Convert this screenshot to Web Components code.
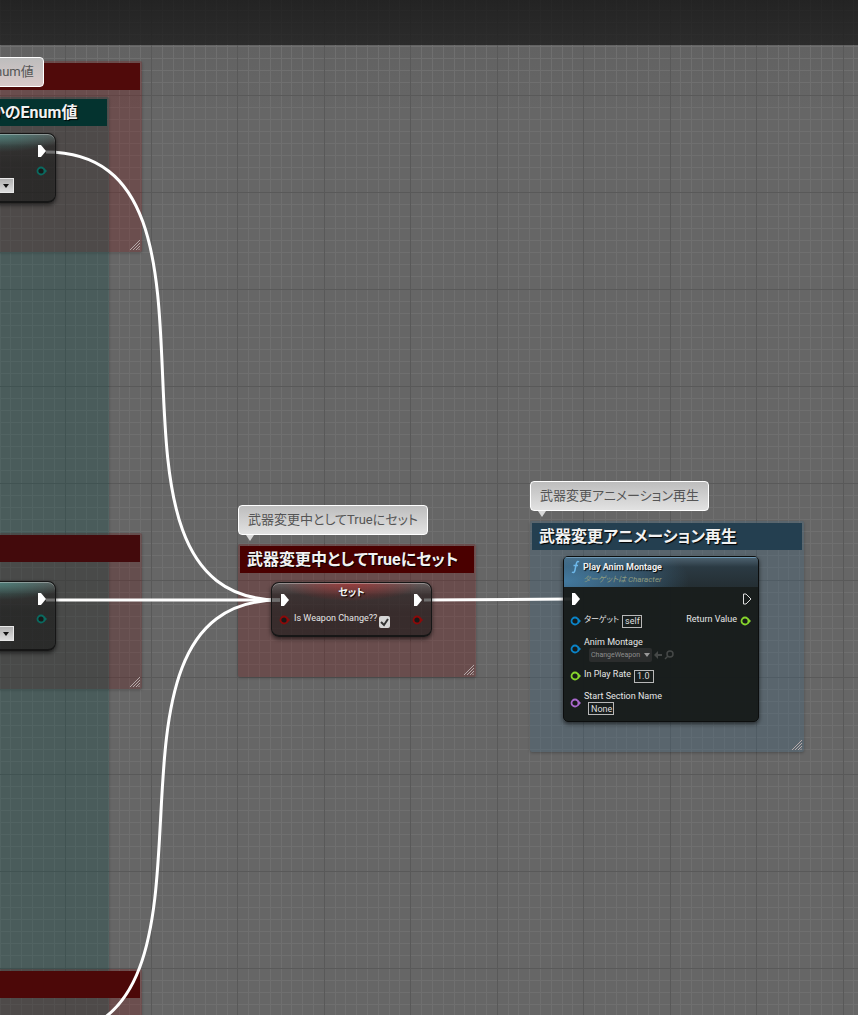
<!DOCTYPE html>
<html lang="ja">
<head>
<meta charset="utf-8">
<meta name="viewport" content="width=device-width, initial-scale=1">
<title>Blueprint Graph</title>
<style>
  body {
    margin: 0;
    background: #666;
    font-family: Roboto, "Noto Sans CJK JP", sans-serif;
    font-feature-settings: "palt";
  }
</style>
</head>
<body>

<blueprint-graph>
  <graph-comment style="left: -20px; top: 61px; width: 162px; height: 191px; --head: #500a0a; --fill: rgba(122, 15, 15, .27)"></graph-comment>
  <graph-comment style="left: -20px; top: 533px; width: 162px; height: 156px; --head: #430a0c; --fill: rgba(100, 15, 15, .27)"></graph-comment>
  <graph-comment style="left: -20px; top: 969px; width: 162px; height: 190px; --head: #4c0808; --fill: rgba(122, 15, 15, .27)"></graph-comment>
  <graph-comment heading="かのEnum値" style="left: -20px; top: 97px; width: 129px; height: 1100px; --head: #04332f; --fill: rgba(0, 68, 64, .27)"></graph-comment>
  <graph-comment heading="武器変更中としてTrueにセット" style="left: 238px; top: 544px; width: 238px; height: 133px; --head: #4a0000; --fill: rgba(115, 10, 10, .27)"></graph-comment>
  <graph-comment heading="武器変更アニメーション再生" style="left: 530px; top: 521px; width: 274px; height: 231px; --head: #243f50; --fill: rgba(60, 100, 125, .3)"></graph-comment>

  <comment-bubble style="left: -34px; top: 57px; --indent: 28px; --tint: #d9c8c8">num値</comment-bubble>
  <comment-bubble style="left: 238px; top: 505px">武器変更中としてTrueにセット</comment-bubble>
  <comment-bubble style="left: 530px; top: 481px">武器変更アニメーション再生</comment-bubble>

  <graph-wires></graph-wires>

  <variable-node style="left: -60px; top: 133px; width: 116px; --glow: rgba(70, 150, 142, .6)">
    <graph-pin slot="exec-out" kind="exec"></graph-pin>
    <graph-pin slot="out" kind="data" style="color: #0a6a60"></graph-pin>
    <pin-select slot="extra" label="Enum" look="light"></pin-select>
  </variable-node>
  <variable-node style="left: -60px; top: 581px; width: 116px; --glow: rgba(70, 150, 142, .6)">
    <graph-pin slot="exec-out" kind="exec"></graph-pin>
    <graph-pin slot="out" kind="data" style="color: #0a6a60"></graph-pin>
    <pin-select slot="extra" label="Enum" look="light"></pin-select>
  </variable-node>
  <variable-node heading="セット" style="left: 271px; top: 582px; width: 161px; --glow: rgba(190, 40, 40, .6)">
    <graph-pin slot="exec-in" kind="exec"></graph-pin>
    <graph-pin slot="exec-out" kind="exec"></graph-pin>
    <graph-pin slot="in" kind="data" style="color: #8c0a0a"></graph-pin>
    <pin-check slot="in" label="Is Weapon Change??"></pin-check>
    <graph-pin slot="out" kind="data" style="color: #8c0a0a"></graph-pin>
  </variable-node>

  <function-node style="left: 563px; top: 556px; width: 196px"></function-node>
</blueprint-graph>

<script>
// canvas with the grid behind and the toolbar shade on top
class BlueprintGraph extends HTMLElement {
  constructor() {
    super();
    this.attachShadow({ mode: 'open' });
    this.shadowRoot.innerHTML = `
      <style>
        :host {
          display: block;
          position: relative;
          min-height: 100vh;
          overflow: hidden;
          background: linear-gradient(#5f5f5f, #666 110px);
        }
        svg {
          position: absolute;
          inset: 0;
          width: 100%;
          height: 100%;
        }
        .minor { stroke: #6f6f6f; }
        .major { stroke: #595959; }
        header {
          position: relative;
          z-index: 9;
          height: 45px;
          background: linear-gradient(rgba(24, 24, 24, .84), rgba(30, 30, 30, .8));
        }
      </style>
      <svg aria-hidden="true" shape-rendering="crispEdges">
        <path class="minor"/>
        <path class="major"/>
      </svg>
      <header></header>
      <slot></slot>
    `;
  }

  connectedCallback() {
    this.drawGrid();
    window.addEventListener('resize', () => this.drawGrid());
  }

  drawGrid() {
    const w = this.clientWidth;
    const h = this.clientHeight;
    const paths = { minor: '', major: '' };
    // 8 small cells to each large one
    for (let i = -8; ; i += 1) {
      const x = Math.floor(65 + i * 778 / 72);
      if (x > w) break;
      paths[i % 8 === 0 ? 'major' : 'minor'] += `M${x + 0.5} 0V${h}`;
    }
    for (let i = -8; ; i += 1) {
      const y = Math.floor(95 + i * 97 / 8);
      if (y > h) break;
      paths[i % 8 === 0 ? 'major' : 'minor'] += `M0 ${y + 0.5}H${w}`;
    }
    this.shadowRoot.querySelector('.minor').setAttribute('d', paths.minor);
    this.shadowRoot.querySelector('.major').setAttribute('d', paths.major);
  }
}

class GraphComment extends HTMLElement {
  constructor() {
    super();
    this.attachShadow({ mode: 'open' });
  }

  connectedCallback() {
    this.shadowRoot.innerHTML = `
      <style>
        :host {
          position: absolute;
          box-sizing: border-box;
          padding: 2px;
          background: var(--fill);
          border-radius: 2px;
          box-shadow: 0 1px 3px rgba(0, 0, 0, .25);
        }
        h2 {
          position: relative;
          z-index: 3;
          box-sizing: border-box;
          height: 27px;
          margin: 0;
          padding-left: 7px;
          background: var(--head);
          color: #f2f2f2;
          font-size: 16px;
          font-weight: 700;
          line-height: 27px;
          white-space: nowrap;
          text-shadow: 1px 1px 1px #000;
        }
        svg {
          position: absolute;
          right: 2px;
          bottom: 2px;
        }
      </style>
      <h2>${this.getAttribute('heading') || ''}</h2>
      <svg width="10" height="10" fill="none" stroke="#b5a9a9" aria-hidden="true">
        <path d="M0 10 10 0M3 10 10 3M6 10 10 6M8.500 10 10 8.500"/>
      </svg>
    `;
  }
}

class CommentBubble extends HTMLElement {
  constructor() {
    super();
    this.attachShadow({ mode: 'open' });
    this.shadowRoot.innerHTML = `
      <style>
        :host {
          position: absolute;
          z-index: 6;
          box-sizing: border-box;
          height: 30px;
          padding: 0 9px 0 var(--indent, 9px);
          border: 1px solid #fff;
          border-radius: 4px;
          background: linear-gradient(#bdbdbd, var(--tint, #e2e2e2));
          color: #555;
          font-size: 13px;
          line-height: 28px;
          white-space: nowrap;
        }
        :host::after {
          content: "";
          position: absolute;
          left: 7px;
          top: 29px;
          border: 4px solid transparent;
          border-top: 6px solid #d8d8d8;
        }
      </style>
      <slot></slot>
    `;
  }
}

class GraphWires extends HTMLElement {
  constructor() {
    super();
    this.attachShadow({ mode: 'open' });
    this.shadowRoot.innerHTML = `
      <style>
        :host {
          position: absolute;
          inset: 0;
          z-index: 4;
        }
        svg {
          display: block;
          overflow: visible;
        }
      </style>
      <svg width="1" height="1" fill="none" stroke="#fff" stroke-width="3" aria-hidden="true">
        <path d="M46 152C261 152 64 600 280 600"/>
        <path d="M46 600H280"/>
        <path d="M42 1036C257 1036 64 600 280 600"/>
        <path d="M424 600 572 599"/>
      </svg>
    `;
  }
}

class GraphPin extends HTMLElement {
  constructor() {
    super();
    this.attachShadow({ mode: 'open' });
  }

  connectedCallback() {
    const kind = this.getAttribute('kind');
    let shape = '<circle cx="5" cy="6" r="3.500" fill="#171a19" stroke="currentColor" stroke-width="1.800"/><path d="M8 3 11 6 8 9z" fill="currentColor"/>';
    if (kind === 'exec') {
      shape = '<path d="M2 0H5L10 6 5 12H2z" fill="#fff"/>';
    } else if (kind === 'exec-open') {
      shape = '<path d="M3.500 1H6L11 6 6 11H3.500z" fill="none" stroke="#ddd"/>';
    }
    this.shadowRoot.innerHTML = `
      <style>
        :host {
          display: block;
          flex: none;
          width: 12px;
          height: 12px;
        }
        svg { display: block; }
      </style>
      <svg width="12" height="12" aria-hidden="true">${shape}</svg>
    `;
  }
}

class PinCheck extends HTMLElement {
  constructor() {
    super();
    this.attachShadow({ mode: 'open' });
  }

  connectedCallback() {
    this.shadowRoot.innerHTML = `
      <style>
        :host { display: block; }
        label {
          display: flex;
          align-items: flex-end;
          gap: 2px;
          color: #e6e6e6;
          font-size: 9px;
          line-height: 12px;
          white-space: nowrap;
        }
        span { padding-bottom: 4px; }
        input {
          appearance: none;
          width: 11px;
          height: 12px;
          margin: 0;
          border-radius: 2px;
          background: #d6d6d6;
        }
        .box { display: grid; padding: 0; }
        .box > * { grid-area: 1 / 1; }
        svg { pointer-events: none; }
        input:not(:checked) + svg { visibility: hidden; }
      </style>
      <label><span>${this.getAttribute('label')}</span>
        <span class="box">
          <input type="checkbox" checked>
          <svg width="11" height="12" fill="none" stroke="#333" stroke-width="2" aria-hidden="true"><path d="M2 6 5 9 9 3"/></svg>
        </span>
      </label>
    `;
  }
}

class PinSelect extends HTMLElement {
  constructor() {
    super();
    this.attachShadow({ mode: 'open' });
  }

  connectedCallback() {
    const light = this.getAttribute('look') === 'light';
    this.shadowRoot.innerHTML = `
      <style>
        :host {
          display: grid;
          width: ${light ? 60 : 63}px;
        }
        select {
          grid-area: 1 / 1;
          appearance: none;
          height: ${light ? 15 : 14}px;
          margin: 0;
          padding: 0 0 0 2px;
          border: ${light ? '1px solid #e8e8e8' : '0'};
          border-radius: ${light ? 0 : 2}px;
          background: ${light ? 'linear-gradient(#b0b0b0, #dcdcdc)' : '#2b2d2d'};
          color: #8d8d8d;
          font: 7px Roboto, sans-serif;
        }
        svg {
          grid-area: 1 / 1;
          place-self: center end;
          margin-right: ${light ? 5 : 2}px;
          pointer-events: none;
        }
      </style>
      <select aria-label="${this.getAttribute('label')}"><option>${this.getAttribute('value') || ''}</option></select>
      <svg width="6" height="4" fill="${light ? '#111' : '#999'}" aria-hidden="true"><path d="M0 0H6L3 4z"/></svg>
    `;
  }
}

// compact node used by the set / enum nodes
class VariableNode extends HTMLElement {
  constructor() {
    super();
    this.attachShadow({ mode: 'open' });
  }

  connectedCallback() {
    this.shadowRoot.innerHTML = `
      <style>
        :host {
          position: absolute;
          z-index: 5;
          box-sizing: border-box;
          border: 1px solid #161616;
          border-bottom-width: 2px;
          border-radius: 8px;
          background:
            radial-gradient(ellipse 70px 18px at 50% 0, var(--glow), transparent),
            linear-gradient(rgba(150, 150, 150, .45), rgba(60, 58, 58, .3) 12px, rgba(20, 18, 18, .1) 30px),
            rgba(22, 22, 22, .54);
          box-shadow: 0 2px 4px rgba(0, 0, 0, .6), inset 0 1px 0 rgba(220, 220, 220, .4);
        }
        .row {
          display: flex;
          align-items: center;
          justify-content: space-between;
          height: 22px;
          padding: 0 7px;
        }
        .head {
          height: 18px;
          padding-top: 8px;
        }
        .side {
          display: flex;
          align-items: center;
          gap: 3px;
        }
        h3 {
          align-self: flex-start;
          margin: -8px 0 0;
          color: #f2f2f2;
          font-size: 10px;
          line-height: 20px;
          text-shadow: 1px 1px 1px #000;
        }
        .extra {
          display: flex;
          justify-content: flex-end;
          margin-top: -4px;
          padding-right: 41px;
        }
        .foot { height: 6px; }
        .foot { height: 8px; }
      </style>
      <div class="row head">
        <div class="side"><slot name="exec-in"></slot></div>
        <h3>${this.getAttribute('heading') || ''}</h3>
        <div class="side"><slot name="exec-out"></slot></div>
      </div>
      <div class="row">
        <div class="side"><slot name="in"></slot></div>
        <div class="side"><slot name="out"></slot></div>
      </div>
      <div class="extra"><slot name="extra"></slot></div>
      <div class="foot"></div>
    `;
  }
}

class FunctionNode extends HTMLElement {
  constructor() {
    super();
    this.attachShadow({ mode: 'open' });
    this.shadowRoot.innerHTML = `
      <style>
        :host {
          position: absolute;
          z-index: 5;
          box-sizing: border-box;
          border: 1px solid #0c0e0e;
          border-radius: 5px;
          background: rgba(20, 24, 23, .92);
          box-shadow: 0 2px 4px rgba(0, 0, 0, .6);
          overflow: hidden;
          color: #e6e6e6;
          font-size: 9px;
          line-height: 11px;
          white-space: nowrap;
        }
        .head {
          display: flex;
          gap: 3px;
          height: 30px;
          padding-left: 7px;
          background:
            radial-gradient(ellipse 125px 50px at 0 80%, rgba(75, 140, 185, .8), rgba(65, 115, 150, .5) 60%, transparent),
            linear-gradient(#4f6472, #2b3a43 10px, #242e33);
          box-shadow: inset 0 1px 0 #6e97b3;
        }
        .head svg { margin-top: 3px; }
        h3 {
          margin: 4px 0 1px;
          color: #f0f0f0;
          font-size: 9px;
          line-height: 12px;
          text-shadow: 1px 1px 1px #000;
        }
        p {
          margin: 0;
          color: #8f9c80;
          font-size: 8px;
          font-style: italic;
        }
        .body {
          display: flex;
          justify-content: space-between;
          padding: 0 6px;
        }
        .row {
          display: flex;
          align-items: center;
          gap: 3px;
          height: 20px;
        }
        .row > graph-pin:first-child { margin-right: -1px; }
        .exec { height: 24px; }
        .tall { height: 36px; }
        .slim { height: 18px; }
        .out { justify-content: flex-end; }
        .out > graph-pin:first-child { margin-right: 0; }
        .row > label, .out > span { padding-bottom: 3px; }
        .small { font-size: 8px; }
        .stack label { display: block; }
        .stack input { display: block; margin-left: 4px; }
        .tools {
          display: flex;
          align-items: center;
          gap: 2px;
          padding-left: 5px;
        }
        input {
          box-sizing: border-box;
          width: 20px;
          height: 13px;
          padding: 0 0 0 2px;
          border: 1px solid #b8b8b8;
          border-radius: 0;
          background: transparent;
          color: #dedede;
          font: 9px Roboto, sans-serif;
        }
        .wide { width: 26px; }
        button {
          padding: 0;
          border: 0;
          background: none;
        }
        button svg { display: block; }
      </style>
      <div class="head">
        <svg width="9" height="14" fill="none" stroke="#6db8ea" stroke-width="1.500" aria-hidden="true">
          <path d="M8 2C6 .5 5.500 3 5 5L4 10C3.500 12.500 2.500 13 1 12M2.500 5.500H7"/>
        </svg>
        <div>
          <h3>Play Anim Montage</h3>
          <p>ターゲットは Character</p>
        </div>
      </div>
      <div class="body">
        <div>
          <div class="row exec"><graph-pin kind="exec"></graph-pin></div>
          <div class="row">
            <graph-pin kind="data" style="color: #0a84c8"></graph-pin>
            <label for="target" class="small">ターゲット</label>
            <input id="target" value="self">
          </div>
          <div class="row tall">
            <graph-pin kind="data" style="color: #0a84c8"></graph-pin>
            <div class="stack">
              <span>Anim Montage</span>
              <div class="tools">
                <pin-select label="Anim Montage" value="ChangeWeapon"></pin-select>
                <button type="button" aria-label="Use selected"><svg width="8" height="10" fill="#454847"><path d="M0 5 4 1V4H8V6H4V9z"/></svg></button>
                <button type="button" aria-label="Browse"><svg width="10" height="10" fill="none" stroke="#454847" stroke-width="1.500"><circle cx="6" cy="4" r="3"/><path d="M4 6 1 9"/></svg></button>
              </div>
            </div>
          </div>
          <div class="row slim">
            <graph-pin kind="data" style="color: #86d42c"></graph-pin>
            <label for="rate">In Play Rate</label>
            <input id="rate" value="1.0">
          </div>
          <div class="row tall">
            <graph-pin kind="data" style="color: #a868cc"></graph-pin>
            <div class="stack">
              <label for="section">Start Section Name</label>
              <input id="section" class="wide" value="None">
            </div>
          </div>
        </div>
        <div>
          <div class="row exec out"><graph-pin kind="exec-open"></graph-pin></div>
          <div class="row out"><span>Return Value</span><graph-pin kind="data" style="color: #86d42c"></graph-pin></div>
        </div>
      </div>
    `;
  }
}

customElements.define('graph-pin', GraphPin);
customElements.define('pin-check', PinCheck);
customElements.define('pin-select', PinSelect);
customElements.define('graph-comment', GraphComment);
customElements.define('comment-bubble', CommentBubble);
customElements.define('graph-wires', GraphWires);
customElements.define('variable-node', VariableNode);
customElements.define('function-node', FunctionNode);
customElements.define('blueprint-graph', BlueprintGraph);
</script>
</body>
</html>
